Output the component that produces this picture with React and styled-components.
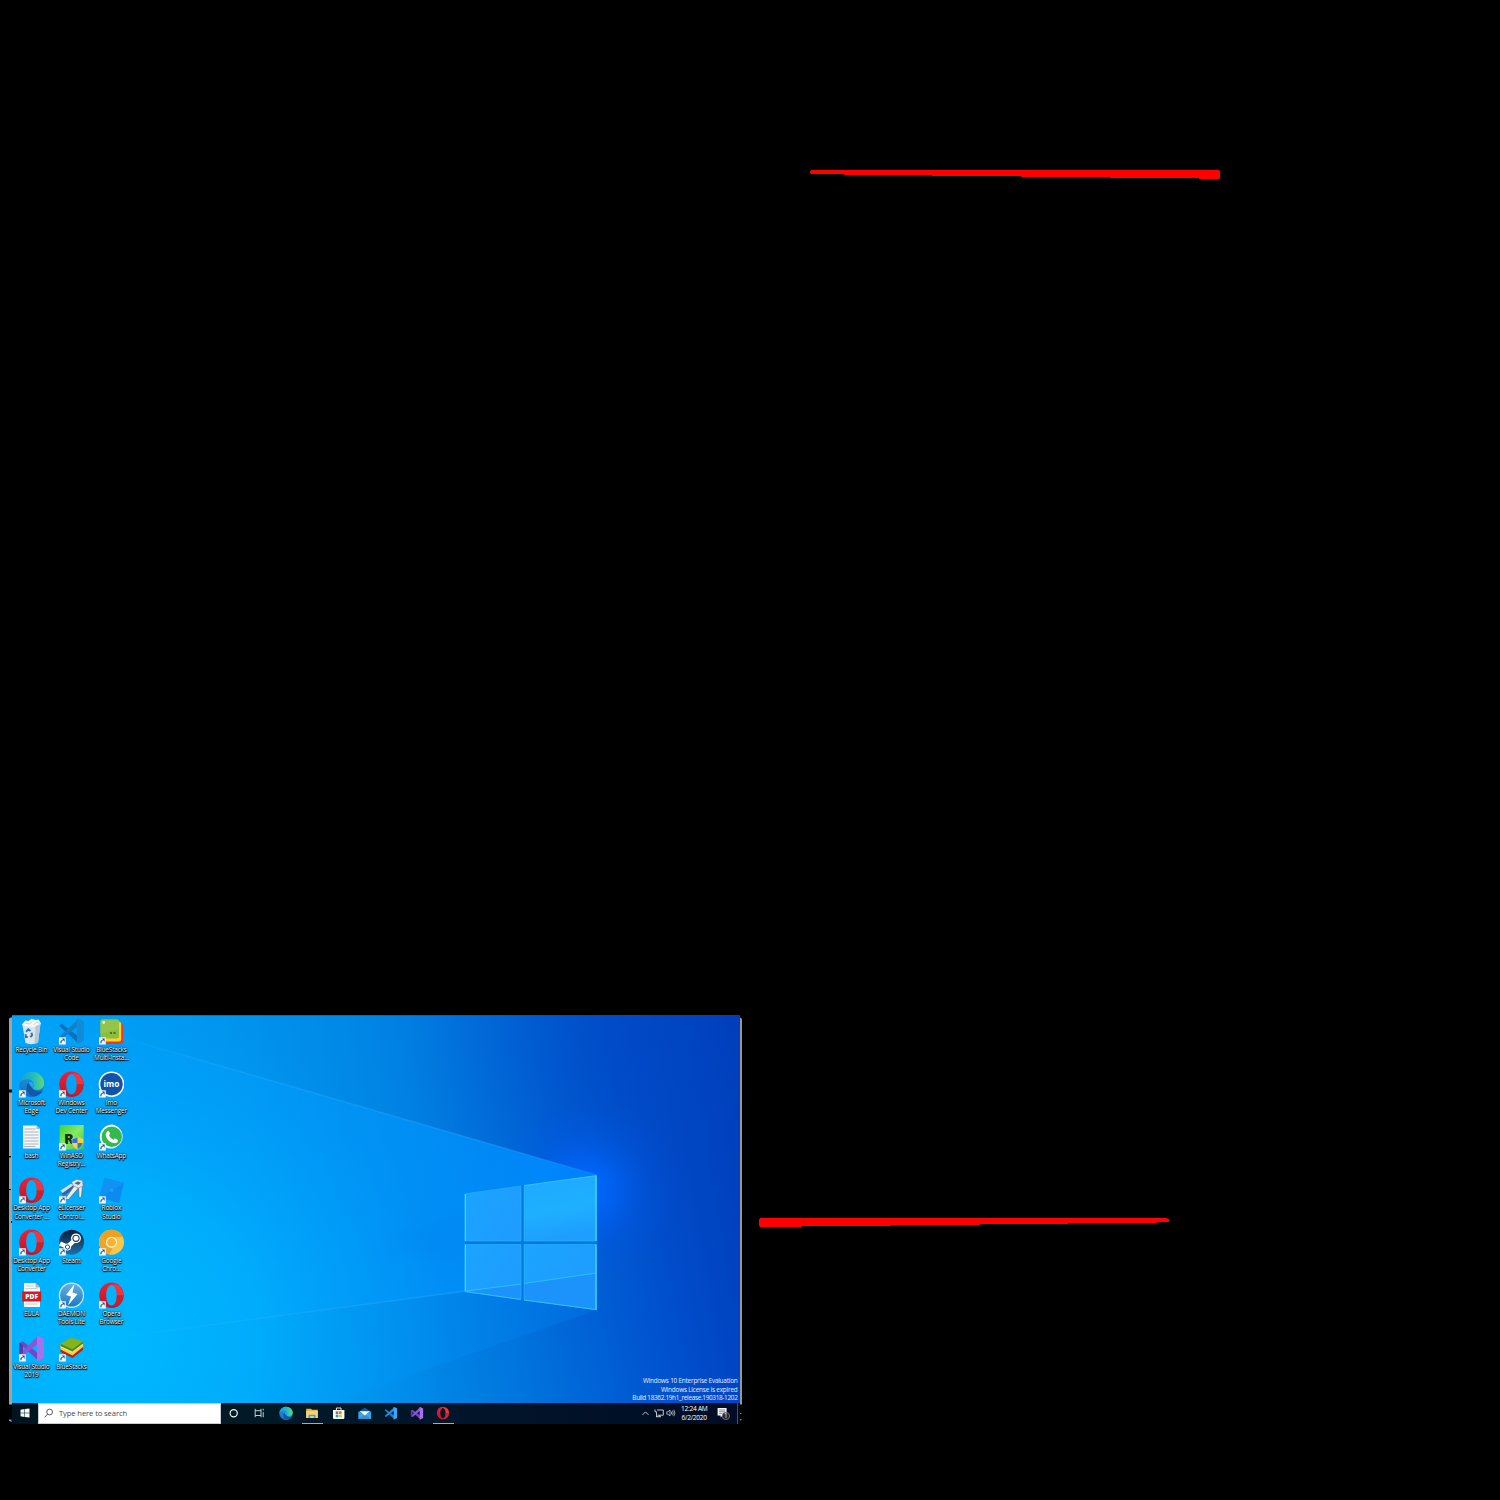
import React from 'react';
import styled, { createGlobalStyle } from 'styled-components';

const GlobalStyle = createGlobalStyle`
  html, body { margin: 0; background: #000; }
  svg { display: block; }
`;

const ui = `'Open Sans', 'Noto Sans', sans-serif`;

const Canvas = styled.main`
  position: relative;
  box-sizing: border-box;
  width: 1500px;
  height: 1500px;
  padding: 1014.5px 0 0 9px;
  overflow: hidden;
  background: #000;
  font-family: ${ui};
`;

const Marks = styled.svg`
  position: absolute;
  left: 0;
  top: 0;
  pointer-events: none;
`;

const Monitor = styled.section`
  display: flex;
  width: 733px;
  height: 409.5px;
`;

const Edge = styled.svg`
  flex: none;
  width: ${p => p.$w}px;
  height: 410px;
`;

const Screen = styled.div`
  display: flex;
  flex-direction: column;
  width: 728px;
  height: 409.5px;
`;

const Desktop = styled.div`
  position: relative;
  display: flex;
  justify-content: space-between;
  height: 388px;
  flex: none;
`;

const Backdrop = styled.svg`
  position: absolute;
  inset: 0;
`;

const IconGrid = styled.div`
  position: relative;
  display: grid;
  grid-auto-flow: column;
  grid-template-rows: repeat(7, 52.8px);
  grid-template-columns: repeat(3, 40px);
  align-content: start;
  margin-left: -0.6px;
  padding-top: 3.7px;
`;

const Shortcut = styled.div`
  display: flex;
  flex-direction: column;
  align-items: center;
`;

const Label = styled.span`
  margin-top: 0.8px;
  font-size: 6.4px;
  font-weight: 500;
  line-height: 8.3px;
  letter-spacing: -0.15px;
  text-align: center;
  white-space: pre;
  color: #f4f6f8;
  text-shadow: 0 0.5px 1px #000, 0.5px 0.7px 1px #000, 0 0 1.5px rgba(0, 0, 0, 0.9), 0 0 2px rgba(0, 0, 0, 0.6);
`;

const Watermark = styled.div`
  position: relative;
  align-self: flex-end;
  display: flex;
  flex-direction: column;
  align-items: flex-end;
  padding: 0 2.5px 0 0;
  margin-bottom: -0.7px;
  color: #e6efff;
  line-height: 8.8px;
  white-space: nowrap;
`;

const WatermarkLine = styled.span`
  font-size: 6.4px;
  letter-spacing: ${p => p.$track}px;
`;

const Taskbar = styled.footer`
  position: relative;
  display: flex;
  align-items: center;
  height: 21.5px;
  background: linear-gradient(90deg, #001420, #001a26 30%, #00142a 70%, #000c24);
`;

const StartButton = styled.div`
  display: flex;
  justify-content: center;
  width: 26px;
`;

const SearchBox = styled.div`
  display: flex;
  align-items: center;
  box-sizing: border-box;
  width: 183px;
  height: 20.5px;
  padding-left: 4.5px;
  gap: 5.5px;
  background: #fff;
  border: 0.5px solid #c8ccd0;
  font-size: 7.6px;
  letter-spacing: -0.1px;
  color: #484848;
  white-space: nowrap;
`;

const Apps = styled.div`
  display: flex;
  height: 100%;
`;

const AppButton = styled.div`
  display: flex;
  align-items: center;
  justify-content: center;
  box-sizing: border-box;
  width: 26.15px;
  background: linear-gradient(#76b9ed, #76b9ed) center bottom / ${p => (p.$open ? '21px 1px' : '0 0')} no-repeat;
`;

const Tray = styled.div`
  display: flex;
  align-items: center;
  flex: 1;
  justify-content: flex-end;
  height: 100%;
`;

const TrayItem = styled.div`
  display: flex;
  justify-content: center;
  width: ${p => p.$w}px;
`;

const Clock = styled.div`
  display: flex;
  flex-direction: column;
  align-items: center;
  width: 34px;
  font-size: 6.6px;
  line-height: 9.2px;
  letter-spacing: -0.26px;
  color: #fff;
  white-space: nowrap;
`;

const PeekButton = styled.div`
  width: 2px;
  height: 100%;
  margin-left: 2.8px;
  border-left: 0.5px solid #43536a;
`;

function Wallpaper() {
  return (
    <Backdrop width="728" height="388" viewBox="12 1015 728 388" preserveAspectRatio="none">
      <defs>
        <linearGradient id="base" x1="0" x2="1" y1="0.1" y2="0">
          <stop offset="0" stopColor="#00a5f9" />
          <stop offset="0.3" stopColor="#0095ee" />
          <stop offset="0.48" stopColor="#0087e6" />
          <stop offset="0.6" stopColor="#0076de" />
          <stop offset="0.72" stopColor="#0061d6" />
          <stop offset="0.84" stopColor="#004dcb" />
          <stop offset="1" stopColor="#003ab8" />
        </linearGradient>
        <radialGradient id="cyan" gradientUnits="userSpaceOnUse" cx="110" cy="1340" r="340">
          <stop offset="0" stopColor="#00b9ff" />
          <stop offset="0.45" stopColor="#00b3ff" stopOpacity="0.7" />
          <stop offset="1" stopColor="#00a0ff" stopOpacity="0" />
        </radialGradient>
        <radialGradient id="glow" gradientUnits="userSpaceOnUse" cx="585" cy="1190" r="95">
          <stop offset="0" stopColor="#006cff" />
          <stop offset="0.3" stopColor="#0064fb" stopOpacity="0.72" />
          <stop offset="0.6" stopColor="#005cec" stopOpacity="0.3" />
          <stop offset="1" stopColor="#0055e0" stopOpacity="0" />
        </radialGradient>
        <radialGradient id="shade" gradientUnits="userSpaceOnUse" cx="640" cy="1050" r="230">
          <stop offset="0" stopColor="#0046c2" stopOpacity="0.5" />
          <stop offset="0.3" stopColor="#0046c2" stopOpacity="0.36" />
          <stop offset="0.6" stopColor="#0046c2" stopOpacity="0.16" />
          <stop offset="1" stopColor="#0046c2" stopOpacity="0" />
        </radialGradient>
        <linearGradient id="beam" gradientUnits="userSpaceOnUse" x1="100" x2="597" y1="0" y2="0">
          <stop offset="0" stopColor="#00a8ff" stopOpacity="0.1" />
          <stop offset="0.65" stopColor="#0096ff" stopOpacity="0.65" />
          <stop offset="0.9" stopColor="#008eff" stopOpacity="0.85" />
          <stop offset="1" stopColor="#0084ff" stopOpacity="0.8" />
        </linearGradient>
        <linearGradient id="floor" gradientUnits="userSpaceOnUse" x1="200" x2="597" y1="0" y2="0">
          <stop offset="0" stopColor="#00a0f4" stopOpacity="0" />
          <stop offset="0.6" stopColor="#008cf0" stopOpacity="0.6" />
          <stop offset="1" stopColor="#006fe2" stopOpacity="0.6" />
        </linearGradient>
        <linearGradient id="ray" gradientUnits="userSpaceOnUse" x1="110" x2="597" y1="0" y2="0">
          <stop offset="0" stopColor="#3cbcff" stopOpacity="0" />
          <stop offset="0.25" stopColor="#32b2ff" stopOpacity="0.3" />
          <stop offset="0.8" stopColor="#2ba5ff" stopOpacity="0.4" />
          <stop offset="1" stopColor="#2ba5ff" stopOpacity="0.2" />
        </linearGradient>
        <linearGradient id="pane" x1="0" x2="1" y1="0" y2="0.6">
          <stop offset="0" stopColor="#1ba4ff" />
          <stop offset="1" stopColor="#1e9cff" />
        </linearGradient>
        <linearGradient id="paneLight" x1="0" x2="0.2" y1="0" y2="1">
          <stop offset="0" stopColor="#20a8ff" />
          <stop offset="0.6" stopColor="#1eb0ff" />
          <stop offset="1" stopColor="#1e9eff" />
        </linearGradient>
        <filter id="soft" x="-20%" y="-20%" width="140%" height="140%"><feGaussianBlur stdDeviation="9" /></filter>
        <filter id="edgeSoft" x="-5%" y="-5%" width="110%" height="110%"><feGaussianBlur stdDeviation="0.35" /></filter>
      </defs>
      <rect x="12" y="1015" width="728" height="388" fill="url(#base)" />
      <rect x="12" y="1015" width="728" height="388" fill="url(#shade)" />
      <rect x="12" y="1015" width="728" height="388" fill="url(#glow)" />
      <path d="M110 1034L597 1175V1245L465 1292L12 1350V1034z" fill="url(#beam)" />
      <path d="M12 1345L465 1291L597 1310L330 1403H12z" fill="url(#floor)" />
      <rect x="12" y="1015" width="728" height="388" fill="url(#cyan)" />
      <path d="M380 1240L465 1215V1265z" fill="#007eea" opacity="0.25" filter="url(#soft)" />
      <path d="M110 1034L597 1175" stroke="url(#ray)" strokeWidth="1.4" />
      <path d="M90 1341L465 1291" stroke="url(#ray)" strokeWidth="1.4" />
      <path d="M465 1193.5L597 1175V1310L465 1291.5z" fill="#0079e4" />
      <path d="M465 1193.7L521 1186V1241H465z" fill="url(#pane)" />
      <path d="M524 1185.6L596.5 1175.5V1241H524z" fill="url(#paneLight)" />
      <path d="M465 1244.5H521V1299.5L465 1291.5z" fill="url(#pane)" />
      <path d="M524 1244.5H596.5V1310L524 1300z" fill="url(#pane)" />
      <path d="M466 1291.5L521 1284.2V1299.5z M524 1283.6L596 1273V1309.5L524 1300z" fill="#1c92fb" />
      <g filter="url(#edgeSoft)" fill="none">
        <path d="M466 1291L521 1284M524 1283.5L596 1273" stroke="#2bc0ff" strokeWidth="1" />
        <path d="M465.3 1193.7L521 1186M524 1185.6L596 1175.7M465 1241H521M524 1241H596M465.3 1244.5H521M524 1244.5H596M466 1291.7L521 1299.5M524 1300L596 1309.6M521 1186V1241M521 1244.5V1299M524 1186V1241M524 1244.5V1300" stroke="#2cb6ff" strokeWidth="0.6" />
        <path d="M524 1185.6L596 1175.7M466 1291.7L521 1299.5M524 1300L596 1309.6" stroke="#32ccff" strokeWidth="0.7" />
        <path d="M596 1175.5V1241M596 1244.5V1310M465.3 1194V1241M465.3 1244.5V1291.5" stroke="#3ce2ff" strokeWidth="1.2" />
      </g>
      <path d="M12 1015.2H740" stroke="#004e8c" strokeWidth="0.6" />
    </Backdrop>
  );
}

const Opera = () => (
  <g>
    <path fillRule="evenodd" fill="url(#operaRed)" d="M13 0.5C20 0.5 25.2 6 25.2 13.2S20 26 13 26 .8 20.2.8 13.2 6 .5 13 .5zM13 3C9.7 3 7.7 7.400 7.700 13.200S9.700 23.400 13 23.400 18.300 19 18.300 13.200 16.300 3 13 3z" />
    <path fill="#ff4b4b" opacity=".55" d="M13 3C16 1.500 20 2.600 22 5.200 25.800 10 25.800 16.800 22 21.300 19.700 24 16 24.800 13 23.400 16.300 23.400 18.300 19 18.300 13.200S16.300 3 13 3z" />
    <path fill="#9c0f1c" opacity=".45" d="M22 21.300C19.700 24 16 24.800 13 23.400 17 23.400 18.300 19 18.300 13.200L25.200 13.200Q25 18 22 21.300z" />
  </g>
);

const EdgeLogo = () => (
  <g>
    <circle cx="13" cy="13.300" r="12.600" fill="url(#edgeBlue)" />
    <path fill="#1257a8" d="M10 11.500C6 17 8.500 24.500 15.500 25.500 19.500 25.200 23 22.500 24.300 19.800 21 21 17 20.600 14.500 18.300z" />
    <path fill="url(#edgeGreen)" d="M.5 12.500C1.300 5.500 6.600.7 13.200.7 20.300.7 25.700 6 25.700 12.200c0 4.300-3.200 6.800-6.900 6.800-3 0-4.900-1.200-4.500-2.200.8-1.300 1.400-2.100 1-3.800C14.700 10.200 12 8.300 8.600 8.300 5 8.300 2 9.800.5 12.500z" />
    <path fill="#1da8f2" d="M10 11.300C11.700 10.300 14.300 11 15.200 12.800 15.600 14.600 14.300 15.600 14.300 17 13 16.300 10.800 14 10 11.300z" />
  </g>
);

const Vsc = ({ dim }) => (
  <g>
    <path d="M.5 7.500L3 5.500 20 18.500V25.500z" fill={dim ? '#0d70bd' : '#1483d4'} />
    <path d="M.5 19L3 21 20 8V1z" fill={dim ? '#117fcb' : '#1c91e2'} />
    <path d="M18.500.3L25.300 3.500V23L18.500 26.300z" fill={dim ? '#118ad8' : '#36a9f5'} />
  </g>
);

const Vs = () => (
  <g>
    <path d="M.8 8L4.500 6.500 20 18.500V26z" fill="#7446c4" />
    <path d="M.8 19.500L4.500 21 20 8V.500z" fill="#9152d6" />
    <path d="M.8 8L4.500 9.500V18L.8 19.500z" fill="#5b3aa8" />
    <path d="M18.500.5L25.500 4V23L18.500 26.500z" fill="#a672ec" />
  </g>
);

const art = {
  bin: (
    <g>
      <path d="M3.800 6L22 5 19.500 24.500Q13 27.500 7 25z" fill="#dde5eb" />
      <path d="M3.300 6.500L7 2.500 10 3 13 .8 17 2 20 1.500 22.500 5.500 20 8 14 9 6 8z" fill="#f7f9fa" />
      <path d="M17 8L22 6 19.500 24.500 16 26z" fill="#b9c7d3" />
      <path d="M7 5L11 6 14 3.500M15 7L18 4 21 5.500" stroke="#b8c2ca" fill="none" strokeWidth=".8" />
      <path d="M7.600 13.800L9.700 11.200 12 13M13 14.800L13.600 17.300 11.800 19.200M9.300 19H7.400L7 16.200" stroke="#1f78ba" strokeWidth="1.900" fill="none" />
    </g>
  ),
  vscode: <Vsc dim />,
  multi: (
    <g>
      <path d="M7 5H20.500Q24.500 5 24.500 8V23Q24.500 26 22 26H7z" fill="#e8392f" />
      <path d="M5 3.500H19.500Q22.700 3.500 22.700 6V21.500Q22.700 23.500 21 23.500H5z" fill="#ffd129" />
      <rect x="2" y="1.500" width="18.500" height="19" rx="2" fill="#8abd40" />
      <path d="M2 16V3.500Q2 1.500 4 1.500H18.500Q20.500 1.500 20.500 3.500V11z" fill="#93c54a" />
      <circle cx="5.200" cy="4.500" r="1.400" fill="#eef8df" />
      <path d="M11.500 14h2v2h-2zM15 14h2v2h-2z" fill="#47732a" />
    </g>
  ),
  edge: <EdgeLogo />,
  opera: <Opera />,
  imo: (
    <g>
      <circle cx="13" cy="13.200" r="12.800" fill="#fff" />
      <circle cx="13" cy="13.200" r="11.200" fill="#1252a8" />
      <text x="13" y="16" fill="#fff" fontFamily="Open Sans, sans-serif" fontWeight="700" fontSize="8.300" textAnchor="middle">imo</text>
    </g>
  ),
  bash: (
    <g>
      <path d="M4.500 1.500H18L21.500 5V24.500H4.500z" fill="#f4f6f8" />
      <path d="M18 1.500V5H21.500z" fill="#a9b6c1" />
      <path d="M6 5H17M6 8H20M6 11H20M6 14H20M6 17H20M6 20H20M6 22.500H17" stroke="#a4adb5" strokeWidth=".9" />
    </g>
  ),
  winaso: (
    <g>
      <rect x="1.200" y="1" width="24" height="24.500" fill="url(#winasoGreen)" />
      <text x="10.500" y="19.500" fontSize="14.500" fontWeight="800" fontFamily="Open Sans, sans-serif" fill="#18320d" textAnchor="middle">R</text>
      <path d="M19 13L24.500 15V19Q24 23 19 25.500 14 23 13.500 19V15z" fill="#2a78ce" stroke="#d7e6ef" strokeWidth=".5" />
      <path d="M19 13L24.500 15V19H19zM13.700 19H19V25.500Q14.300 23 13.700 19z" fill="#ffd23d" />
    </g>
  ),
  whatsapp: (
    <g>
      <path d="M13.500 .5A12 12 0 1 1 7.500 23.500L1.500 25.500 3 19A12.300 12.300 0 0 1 13.500 .5z" fill="#f5fff7" />
      <circle cx="13.300" cy="12.700" r="10.200" fill="#35b84e" />
      <path d="M8.500 7.500Q10 6 10.800 7.800L11.500 9.800Q11.600 10.500 10.500 11.500 12 14.700 15 15.800L16.300 14.300 19.600 16Q19.500 19.300 16 19.300 9.500 18.500 7.500 12.500 6.600 9.500 8.500 7.500z" fill="#fff" />
    </g>
  ),
  keys: (
    <g>
      <path d="M3 16L15 7 18 10 5 19z" fill="#2f63ad" />
      <path d="M2 13.500L12 7 16 7.500 4 16z" fill="#d6dde5" />
      <path d="M17 7L6.500 22 10 22.500 20 11zM20 8L20.500 21 23 20 24 9z" fill="#e8edf1" stroke="#59636d" strokeWidth=".7" />
      <path d="M13 5L18 2.500 24 3.500 24.500 9 20 11 15 9z" fill="#e1e7eb" stroke="#7c8790" strokeWidth=".6" />
      <path d="M16 6.500L19 4.500 22.500 5.500 20 8z" fill="#4b6c87" />
    </g>
  ),
  roblox: (
    <g>
      <path d="M6 1L25.500 6 20.500 26 .8 20.500z" fill="#0b8bf0" />
      <path d="M6 1L25.500 6 11 15 .8 20.500z" fill="#1092f5" />
      <path d="M11.500 10.500L15.500 11.600 14.500 15.700 10.500 14.600z" fill="#1f9eff" stroke="#0a7edb" strokeWidth=".4" />
    </g>
  ),
  steam: (
    <g>
      <circle cx="13" cy="13.200" r="12.500" fill="url(#steamBlue)" />
      <path d="M1.500 14.500L9 18 17 10" stroke="#fff" strokeWidth="4.500" fill="none" />
      <circle cx="17.500" cy="9.300" r="4.900" fill="#fff" />
      <circle cx="17.500" cy="9.300" r="3.600" fill="#173e61" />
      <circle cx="17.500" cy="9.300" r="2.500" fill="#fff" />
      <circle cx="9" cy="18" r="3.500" fill="#fff" />
      <circle cx="9" cy="18" r="2.100" fill="none" stroke="#1d4c72" strokeWidth="1" />
    </g>
  ),
  chrome: (
    <g>
      <circle cx="13" cy="13.200" r="12.500" fill="#fcc648" />
      <path d="M2 7A12.500 12.500 0 0 1 24.200 8H13A6 6 0 0 0 7.500 15z" fill="#efa01e" />
      <path d="M2 7L8 16.500A6 6 0 0 0 14 19L11 25.500A12.500 12.500 0 0 1 2 7z" fill="#e9a534" />
      <circle cx="13" cy="13.200" r="5.500" fill="#fff3cc" />
      <circle cx="13" cy="13.200" r="4.300" fill="#f6b332" />
    </g>
  ),
  pdf: (
    <g>
      <path d="M5.500 1H17L21.500 5.500V25H5.500z" fill="#f7f8f9" />
      <path d="M17 1V5.500H21.500z" fill="#aeb9c2" />
      <path d="M7 4H15M7 6.500H19M7 22H19" stroke="#bcc5cb" strokeWidth=".8" />
      <rect x="3.700" y="9.500" width="19" height="10" fill="#d71920" />
      <text x="13.200" y="17" fontSize="6.700" fontFamily="Open Sans, sans-serif" fontWeight="800" fill="#fff" textAnchor="middle">PDF</text>
    </g>
  ),
  daemon: (
    <g>
      <circle cx="13" cy="13.200" r="12.700" fill="#d2e7f4" />
      <circle cx="13" cy="13.200" r="11.400" fill="url(#daemonBlue)" />
      <path d="M16 2L7.500 13 12.500 14.500 9.500 23.500 19 12 14 10.500z" fill="#fff" />
    </g>
  ),
  vs: <Vs />,
  stacks: (
    <g>
      <path d="M2 13.500L14 19.500 24.500 11.500V15L14 23 2 17z" fill="#b91d25" />
      <path d="M2 11.500L14 17.500 24.500 9.500V12L14 20.500 2 14.500z" fill="#f6cf2c" />
      <path d="M2 9L14 15 24.500 7.500V10L14 18 2 12z" fill="#f0e977" />
      <path d="M2 8.700L12 3Q13 2.500 14 3L24.500 6.500 14 14.500z" fill="#86b31c" />
      <path d="M2 8.700L14 14.500V16.500L2 11zM14 14.500L24.500 6.500V8.500L14 16.500z" fill="#567f18" />
    </g>
  ),
};

function DesktopIcon({ kind, link }) {
  return (
    <svg width="26" height="27" viewBox="-0.5 0 26 27">
      {art[kind]}
      {link && (
        <g>
          <rect x="0.500" y="19.300" width="6.800" height="7.200" fill="#f5f7fa" />
          <path d="M2.400 25.300Q2.100 22.600 4.200 22.200" stroke="#21528f" strokeWidth="1.100" fill="none" />
          <path d="M3.300 20.600H6.100V23.700z" fill="#21528f" />
        </g>
      )}
    </svg>
  );
}

const shortcuts = [
  ['bin', 'Recycle Bin', false],
  ['edge', 'Microsoft\nEdge', true],
  ['bash', 'bash', false],
  ['opera', 'Desktop App\nConverter ...', true],
  ['opera', 'Desktop App\nConverter', true],
  ['pdf', 'EULA', false],
  ['vs', 'Visual Studio\n2019', true],
  ['vscode', 'Visual Studio\nCode', true],
  ['opera', 'Windows\nDev Center', true],
  ['winaso', 'WinASO\nRegistry...', true],
  ['keys', 'eLicenser\nControl...', true],
  ['steam', 'Steam', true],
  ['daemon', 'DAEMON\nTools Lite', true],
  ['stacks', 'BlueStacks', true],
  ['multi', 'BlueStacks\nMulti-Insta...', true],
  ['imo', 'Imo\nMessenger', true],
  ['whatsapp', 'WhatsApp', true],
  ['roblox', 'Roblox\nStudio', true],
  ['chrome', 'Google\nChro...', true],
  ['opera', 'Opera\nBrowser', true],
];

const taskArt = {
  cortana: <circle cx="6.700" cy="7.300" r="3.600" fill="none" stroke="#f2f5f7" strokeWidth="1.200" />,
  taskview: (
    <path d="M2.200 2.800V4.700H8V2.800M2.200 11.200V9.500H8V11.200M2.200 4.700V9.500M8 4.700V9.500M10.200 2.800V4.500M10.200 6V11.200" fill="none" stroke="#d8dfe3" strokeWidth=".9" />
  ),
  edge: <g transform="translate(.1 .3) scale(.53)"><EdgeLogo /></g>,
  explorer: (
    <g transform="translate(0 .3)">
      <path d="M1.200 2.500H6L7 3.500H12.800V11.500H1.200z" fill="#e9ad37" />
      <path d="M1.200 4.500H12.800V11.700H1.200z" fill="#f7d277" />
      <path d="M3.500 8.500H10.500V11.700H9V10H5V11.700H3.500z" fill="#3c9fd6" />
    </g>
  ),
  store: (
    <g transform="translate(-.3 .3)">
      <path d="M4.700 4V1.700H9.300V4" fill="none" stroke="#fff" strokeWidth=".9" />
      <path d="M1.300 3.800H12.700V11.500Q12.700 12.700 11.500 12.700H2.500Q1.300 12.700 1.300 11.500z" fill="#fff" />
      <path d="M4 5H6.700V7.700H4z" fill="#f25022" /><path d="M7.300 5H10V7.700H7.300z" fill="#7fba00" />
      <path d="M4 8.300H6.700V11H4z" fill="#00a4ef" /><path d="M7.300 8.300H10V11H7.300z" fill="#ffb900" />
    </g>
  ),
  mail: (
    <g transform="translate(-.2 .4)">
      <path d="M.7 5L7 1.300 13.300 5V12.500H.7z" fill="#0b5ba8" />
      <path d="M.7 5.200L7 8.500 13.300 5.200V12.500H.7z" fill="#3aa5ea" />
      <path d="M.7 12.500L7 8 13.300 12.500z" fill="#2b93dc" />
      <path d="M1.800 4.800H12.200L7 9z" fill="#fff" />
    </g>
  ),
  vscode: <g transform="translate(.4 .6) scale(.5)"><Vsc /></g>,
  vs: <g transform="translate(.4 .6) scale(.5)"><Vs /></g>,
  opera: <g transform="translate(.5 .5) scale(.5)"><Opera /></g>,
};

const tasks = [
  ['cortana'], ['taskview'], ['edge'], ['explorer', true], ['store'],
  ['mail'], ['vscode'], ['vs'], ['opera', true],
];

function SharedPaint() {
  return (
    <Marks width="1500" height="1500" shapeRendering="crispEdges">
      <defs>
        <linearGradient id="operaRed" x2="0" y2="1"><stop stopColor="#f01f33" /><stop offset="1" stopColor="#c01425" /></linearGradient>
        <linearGradient id="edgeBlue" x2="0" y2="1"><stop stopColor="#1698da" /><stop offset="1" stopColor="#176fc7" /></linearGradient>
        <linearGradient id="edgeGreen"><stop stopColor="#179ee0" /><stop offset=".55" stopColor="#22b9c6" /><stop offset="1" stopColor="#60d96b" /></linearGradient>
        <linearGradient id="winasoGreen" x2="1" y2="1"><stop stopColor="#43d036" /><stop offset=".5" stopColor="#86ea66" /><stop offset="1" stopColor="#3cc42c" /></linearGradient>
        <linearGradient id="steamBlue" x2="0" y2="1"><stop stopColor="#0c1b39" /><stop offset="1" stopColor="#1d72aa" /></linearGradient>
        <linearGradient id="daemonBlue" x2="0" y2="1"><stop stopColor="#68aee1" /><stop offset="1" stopColor="#177dc4" /></linearGradient>
      </defs>
      <path fill="#f00" d="M810 171H811V170H1219V171H1220V178H1219V179H1199V178H1110V177H1021V176H932V175H844V174H811V173H810z" />
      <path fill="#f00" d="M759 1219H760V1218H1167V1219H1169V1222H1157V1223H1068V1224H980V1225H891V1226H802V1227H760V1226H759z" />
    </Marks>
  );
}

export default function App() {
  return (
    <>
      <GlobalStyle />
      <Canvas>
        <SharedPaint />
        <Monitor>
          <Edge $w={3} viewBox="0 0 3 410">
            <path d="M0 4Q0 2.500 2 2.500H3V389.500H0z" fill="#a3a3a3" />
            <path d="M0 74.500H3V77.500H0zM0 141H2V142.500H0zM0 174H2V175H0zM2 206H3V208H2z" fill="#111" />
            <path d="M0 404.500H2.500V407H1.500V406H0z" fill="#5da9df" />
          </Edge>
          <Screen>
            <Desktop>
              <Wallpaper />
              <IconGrid>
                {shortcuts.map(([kind, label, link], i) => (
                  <Shortcut key={i}>
                    <DesktopIcon kind={kind} link={link} />
                    <Label>{label}</Label>
                  </Shortcut>
                ))}
              </IconGrid>
              <Watermark>
                <WatermarkLine $track={-0.21}>Windows 10 Enterprise Evaluation</WatermarkLine>
                <WatermarkLine $track={-0.19}>Windows License is expired</WatermarkLine>
                <WatermarkLine $track={-0.31}>Build 18362.19h1_release.190318-1202</WatermarkLine>
              </Watermark>
            </Desktop>
            <Taskbar>
              <StartButton>
                <svg width="10" height="10" viewBox="0 0 10 10">
                  <path d="M.5 1.700L4.400 1.100V4.700H.5zM4.900 1L9.500 .4V4.700H4.900zM.5 5.200H4.400V8.900L.5 8.300zM4.900 5.200H9.500V9.600L4.900 9z" fill="#f5f7f8" />
                </svg>
              </StartButton>
              <SearchBox>
                <svg width="10" height="10" viewBox="0 0 10 10" fill="none" stroke="#333" strokeWidth=".8">
                  <circle cx="5.600" cy="4" r="2.900" /><path d="M3.600 6.200L.6 9.400" />
                </svg>
                Type here to search
              </SearchBox>
              <Apps>
                {tasks.map(([kind, open]) => (
                  <AppButton key={kind} $open={open}>
                    <svg width="14" height="14" viewBox="0 0 14 14">{taskArt[kind]}</svg>
                  </AppButton>
                ))}
              </Apps>
              <Tray>
                <TrayItem $w={13}>
                  <svg width="8" height="8" viewBox="0 0 8 8"><path d="M.5 5.900L3.500 2.900 6.500 5.900" fill="none" stroke="#eee" strokeWidth=".8" /></svg>
                </TrayItem>
                <TrayItem $w={13}>
                  <svg width="10" height="10" viewBox="0 0 10 10"><path d="M3 2H9.300V7.200H3.500M1 1.500V3.800H2.500V9M2 8.700H7M5.500 7.200V8.700" fill="none" stroke="#eee" strokeWidth=".8" /></svg>
                </TrayItem>
                <TrayItem $w={12}>
                  <svg width="10" height="10" viewBox="0 0 10 10"><path d="M.8 3.800H2L4 2V8L2 6.200H.8zM5.200 3.500Q6.200 5 5.200 6.500M6.500 2.700Q8 5 6.500 7.300M7.800 1.800Q10 5 7.800 8.200" fill="none" stroke="#ddd" strokeWidth=".7" /></svg>
                </TrayItem>
                <Clock><span>12:24 AM</span><span>6/2/2020</span></Clock>
                <TrayItem $w={23}>
                  <svg width="14" height="14" viewBox="-0.6 0 14 14">
                    <path d="M1 2H10V9.500H6L4 11.500V9.500H1z" fill="#f3f3f3" />
                    <path d="M2.500 4H8.500M2.500 5.700H8.500M2.500 7.500H6" stroke="#4a5263" strokeWidth=".6" />
                    <circle cx="9.300" cy="10" r="3.700" fill="#252a35" stroke="#9299a3" strokeWidth=".6" />
                    <text x="9.300" y="12.200" fontSize="6.200" fontFamily="Open Sans, sans-serif" textAnchor="middle" fill="#fff">1</text>
                  </svg>
                </TrayItem>
                <PeekButton />
              </Tray>
            </Taskbar>
          </Screen>
          <Edge $w={2} viewBox="0 0 2 410">
            <path d="M0 2.500Q2 2.500 2 5V389.500H0z" fill="#979797" />
            <path d="M0 398H1.500V399H0zM0 404H1.500V405.500H0z" fill="#777" />
          </Edge>
        </Monitor>
      </Canvas>
    </>
  );
}
